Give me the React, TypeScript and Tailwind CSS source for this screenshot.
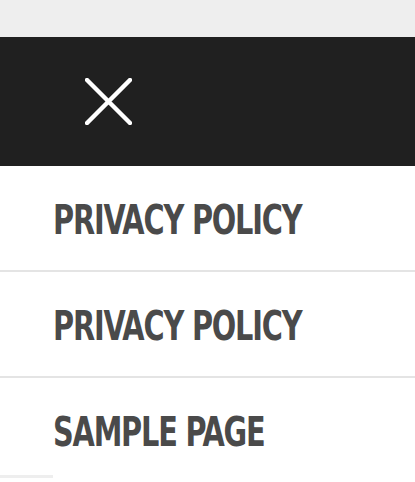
const items = ['PRIVACY POLICY', 'PRIVACY POLICY', 'SAMPLE PAGE']

export default function App() {
  return (
    <div className="h-[482px] w-[415px] overflow-hidden bg-white">
      <div className="h-[37px] bg-[#eeeeee]" />
      <header className="flex h-[129px] items-center bg-[#202020] pl-[85px]">
        <svg width="47" height="47" viewBox="0 0 47 47" aria-label="Close menu">
          <path d="M2 2 L45 45 M45 2 L2 45" stroke="#ffffff" strokeWidth="4.4" strokeLinecap="square" />
        </svg>
      </header>
      <nav>
        {items.map((label, i) => (
          <a
            key={i}
            href="#"
            className="flex h-[106px] items-center border-b-2 border-[#e4e4e4] pl-[53px] pt-[5px] text-[#4a4a4a]"
          >
            <span
              className="origin-left scale-x-[0.78] text-[41px] leading-none font-bold tracking-[-1.5px]"
              style={{ fontFamily: '"Liberation Sans Narrow", "DejaVu Sans Condensed", "Liberation Sans", sans-serif', fontStretch: 'condensed' }}
            >
              {label}
            </span>
          </a>
        ))}
        <div className="mt-[-9px] h-[3px] w-[53px] bg-[#eeeeee]" />
      </nav>
    </div>
  )
}
